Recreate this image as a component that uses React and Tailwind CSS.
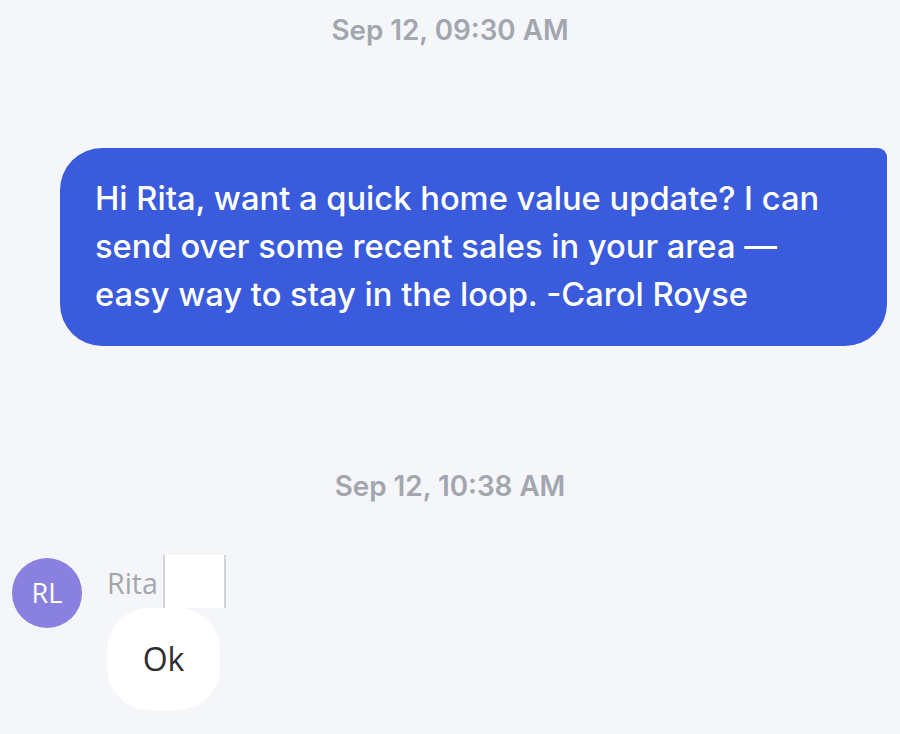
export default function App() {
  return (
    <div className="w-[900px] h-[734px] overflow-hidden bg-[#f5f6fa] flex flex-col">
      {/* first timestamp */}
      <div className="h-[62px] flex items-center justify-center text-[27.8px] font-semibold text-[#a3a6ae] font-['Inter',sans-serif]">
        Sep 12, 09:30 AM
      </div>

      {/* outgoing message */}
      <div className="mt-[86px] pl-[60px] pr-[13px]">
        <div className="h-[198px] bg-[#3a5bdc] rounded-[42px] rounded-tr-[9px] pl-[35px] pr-[20px] pt-[26px] text-white text-[32.7px] font-medium leading-[48px] font-['Inter',sans-serif]">
          Hi Rita, want a quick home value update? I can
          <br />
          send over some recent sales in your area —
          <br />
          easy way to stay in the loop. -Carol Royse
        </div>
      </div>

      {/* second timestamp */}
      <div className="mt-[126px] h-[30px] flex items-center justify-center text-[27.8px] font-semibold text-[#a3a6ae] font-['Inter',sans-serif]">
        Sep 12, 10:38 AM
      </div>

      {/* incoming message */}
      <div className="mt-[53px] flex pl-[12px] gap-[25px]">
        <div className="mt-[3px] w-[70px] h-[70px] rounded-full bg-[#8a80e0] flex items-center justify-center text-white text-[27px] font-['Open_Sans',sans-serif]">
          RL
        </div>
        <div className="flex flex-col">
          <div className="flex items-start h-[53px]">
            <span className="mt-[10px] text-[28.6px] leading-[36px] text-[#a4a6ad] font-['Open_Sans',sans-serif]">Rita</span>
            <span className="ml-[5px] w-[63px] h-[53px] bg-white border-x-2 border-[#d3d4d8]" />
          </div>
          <div className="w-[113px] h-[102px] bg-white rounded-[42px] flex items-center justify-center text-[32px] text-[#2e2e33] font-['Open_Sans',sans-serif]">
            Ok
          </div>
        </div>
      </div>
    </div>
  );
}
